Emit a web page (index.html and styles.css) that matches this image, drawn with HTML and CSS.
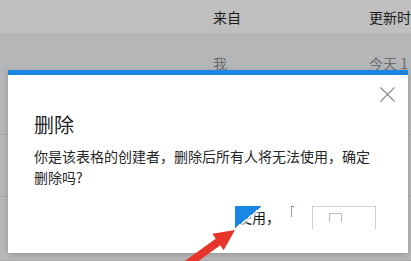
FILE: index.html
```html
<!DOCTYPE html>
<html lang="zh">
<head>
<meta charset="utf-8">
<link rel="stylesheet" href="styles.css">
</head>
<body>
<div class="page">
  <div class="thead">
    <span class="c-from">来自</span>
    <span class="c-time">更新时</span>
  </div>
  <div class="row r1">
    <span class="c-from muted">我</span>
    <span class="c-time muted">今天 1</span>
  </div>
  <div class="row r2"></div>
  <div class="row r3"></div>
</div>

<div class="dialog">
  <div class="dlg-top">
    <svg class="close" width="15" height="15" viewBox="0 0 15 15">
      <path d="M0.5 0.5 L14.5 14.5 M14.5 0.5 L0.5 14.5" stroke="#8a8a8a" stroke-width="1.1" fill="none"/>
    </svg>
  </div>
  <div class="dlg-title">删除</div>
  <div class="dlg-body">你是该表格的创建者，删除后所有人将无法使用，确定删除吗?</div>
  <div class="dlg-foot">
    <span class="ok"><span class="ok-blue"></span>使用，</span>
    <span class="mark"></span>
    <span class="cancel"><span class="ghost"></span></span>
  </div>
</div>

<svg class="arrow" width="411" height="261" viewBox="0 0 411 261">
  <polygon points="235,230 212.4,233.7 215.7,238.7 172.7,269.7 177.3,276.3 220.3,245.3 223.6,250.3" fill="#e8352b"/>
</svg>
</body>
</html>
```

FILE: styles.css
```css
html, body {
  margin: 0;
  padding: 0;
}
body {
  width: 411px;
  height: 261px;
  overflow: hidden;
  position: relative;
  background: #a9a9a9;
  font-family: "Noto Sans CJK SC", "Noto Sans", sans-serif;
}
.page {
  display: flex;
  flex-direction: column;
}
.thead {
  height: 34px;
  background: #bfbfbf;
  display: flex;
  align-items: center;
  padding-left: 213px;
  font-size: 14px;
  color: #1c1c1c;
  white-space: nowrap;
  border-bottom: 1px solid #b3b3b3;
  box-sizing: border-box;
}
.c-from {
  width: 156px;
  flex: none;
}
.c-time {
  flex: none;
}
.row {
  display: flex;
  padding-left: 213px;
  background: #b5b6b7;
  border-bottom: 1px solid #a9a9aa;
  box-sizing: border-box;
  font-size: 14px;
  white-space: nowrap;
}
.r1 {
  height: 101px;
  padding-top: 20px;
  line-height: 18px;
}
.r2 {
  height: 62px;
}
.r3 {
  height: 64px;
  background: #b8b8b8;
}
.muted {
  color: #6e6e6e;
}

.dialog {
  position: absolute;
  left: 8px;
  top: 70px;
  width: 400px;
  height: 183px;
  box-sizing: border-box;
  background: #ffffff;
  border-top: 5px solid #1b86e2;
  padding: 12px 13px 0 26px;
  box-shadow: 0 2px 6px rgba(0, 0, 0, 0.18);
  display: flex;
  flex-direction: column;
}
.dlg-top {
  display: flex;
  justify-content: flex-end;
  height: 15px;
}
.close {
  display: block;
}
.dlg-title {
  margin-top: 9px;
  font-size: 20px;
  line-height: 28px;
  color: #1f1f1f;
}
.dlg-body {
  margin-top: 7px;
  width: 344px;
  font-size: 14px;
  line-height: 21px;
  color: #262626;
}
.dlg-foot {
  margin-top: 18px;
  display: flex;
  justify-content: flex-end;
  align-items: flex-start;
  padding-right: 19px;
  height: 24px;
}
.ok {
  position: relative;
  padding-left: 3px;
  font-size: 14px;
  line-height: 22px;
  color: #111;
  white-space: nowrap;
}
.ok-blue {
  position: absolute;
  left: 0;
  top: 0;
  width: 27px;
  height: 22px;
  background: linear-gradient(to bottom right, #1a86e6 50%, rgba(255, 255, 255, 0.9) 50%, rgba(255, 255, 255, 0.6) 56%, rgba(255, 255, 255, 0) 64%);
}
.mark {
  margin-left: 11px;
  width: 3px;
  height: 11px;
  border-left: 1px solid #9a9a9a;
  border-top: 1px solid #6f8fb0;
  box-sizing: border-box;
}
.cancel {
  margin-left: 18px;
  width: 64px;
  height: 24px;
  border: 1px solid #cfcfcf;
  border-bottom-color: #ffffff;
  box-sizing: border-box;
  display: flex;
  padding-left: 16px;
  padding-top: 6px;
}
.ghost {
  width: 13px;
  height: 9px;
  border: 1px solid #bdbdbd;
  border-bottom: none;
  box-sizing: border-box;
}
.arrow {
  position: absolute;
  left: 0;
  top: 0;
  pointer-events: none;
}
```
